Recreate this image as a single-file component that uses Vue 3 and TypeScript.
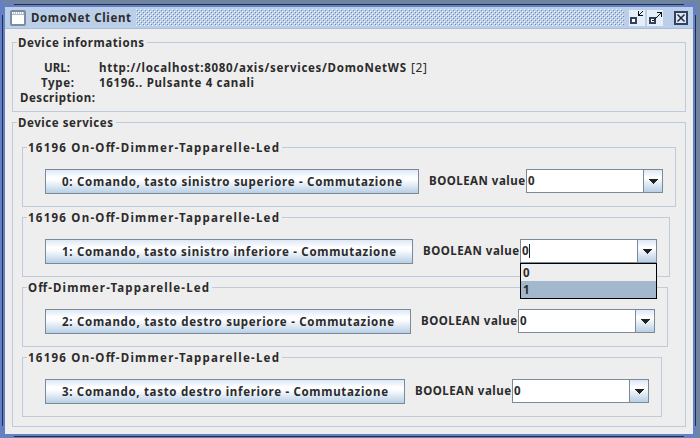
<script setup lang="ts">
import { ref } from 'vue'

interface Service {
  title: string
  titleWidth: number
  command: string
  width: number
  buttonWidth: number
}

const services: Service[] = [
  { title: '16196 On-Off-Dimmer-Tapparelle-Led', titleWidth: 251, command: '0: Comando, tasto sinistro superiore - Commutazione', width: 654, buttonWidth: 374 },
  { title: '16196 On-Off-Dimmer-Tapparelle-Led', titleWidth: 251, command: '1: Comando, tasto sinistro inferiore - Commutazione', width: 648, buttonWidth: 368 },
  { title: 'Off-Dimmer-Tapparelle-Led', titleWidth: 181, command: '2: Comando, tasto destro superiore - Commutazione', width: 646, buttonWidth: 366 },
  { title: '16196 On-Off-Dimmer-Tapparelle-Led', titleWidth: 251, command: '3: Comando, tasto destro inferiore - Commutazione', width: 640, buttonWidth: 360 },
]
const opened = ref(1)
const highlighted = ref(1)
</script>

<template>
  <div class="desktop">
    <main class="window">
      <header class="titlebar">
        <svg class="app-icon" width="16" height="16" viewBox="0 0 16 16">
          <rect x="1" y="1" width="14" height="14" rx="1" fill="#fff" stroke="#7d8ba3" stroke-width="2" />
          <path d="M2 4.5H14" stroke="#a9b7cc" />
          <path d="M3 3H14" stroke="#7d8ba3" stroke-dasharray="1 1" />
        </svg>
        <svg class="title" width="100" height="20"><text x="0" y="14" textLength="100">DomoNet Client</text></svg>
        <svg class="grip" width="488" height="17" shape-rendering="crispEdges">
          <defs>
            <pattern id="dots" width="4" height="4" patternUnits="userSpaceOnUse">
              <rect width="4" height="4" fill="#bdd0ea" />
              <path d="M0 0h1v1h-1zM2 2h1v1h-1z" fill="#f4f9ff" />
              <path d="M1 1h1v1h-1zM3 3h1v1h-1z" fill="#7189b4" />
            </pattern>
          </defs>
          <rect width="488" height="17" fill="url(#dots)" />
        </svg>
        <svg class="control" width="16" height="16" viewBox="0 0 16 16" shape-rendering="crispEdges">
          <rect width="16" height="16" fill="#e6eefa" />
          <rect x="2" y="8" width="5" height="5" fill="#fff" stroke="#33415f" stroke-width="2" />
          <path d="M9 1V6H14V5H11V4H12V3H13V2H14V1H13V2H12V3H11V4H10V1Z" fill="#111" />
        </svg>
        <svg class="control" width="16" height="16" viewBox="0 0 16 16" shape-rendering="crispEdges">
          <rect width="16" height="16" fill="#e6eefa" />
          <rect x="3" y="8" width="5" height="5" fill="#fff" stroke="#33415f" stroke-width="2" />
          <path d="M10 2H15V7H14V4H13V5H12V6H11V7H10V8H9V9H8V10H7V11H6V10H5V11H6V10H7V9H8V8H9V7H10V6H11V5H12V4H13V3H10Z" fill="#111" />
        </svg>
        <svg class="control close" width="14" height="14" viewBox="0 0 14 14">
          <rect x="1" y="1" width="12" height="12" fill="#dce8f8" stroke="#33415f" stroke-width="2" />
          <path d="M3.5 3.5L10.5 10.5M10.5 3.5L3.5 10.5" stroke="#222b3c" stroke-width="1.5" />
        </svg>
      </header>

      <section class="group info">
        <svg class="legend" width="130" height="16"><text x="1" y="12" textLength="126">Device informations</text></svg>
        <div class="row"><svg width="76" height="15"><text x="26" y="12" textLength="26">URL:</text></svg><svg width="340" height="15"><text x="5" y="12" textLength="307">http://localhost:8080/axis/services/DomoNetWS</text><text class="light" x="317" y="12" textLength="16">[2]</text></svg></div>
        <div class="row"><svg width="76" height="15"><text x="23" y="12" textLength="33">Type:</text></svg><svg width="340" height="15"><text x="5" y="12" textLength="155">16196.. Pulsante 4 canali</text></svg></div>
        <div class="row"><svg width="90" height="15"><text x="2" y="12" textLength="75">Description:</text></svg></div>
      </section>

      <section class="group services">
        <svg class="legend" width="99" height="16"><text x="1" y="12" textLength="95">Device services</text></svg>
        <div v-for="(s, i) in services" :key="i" class="group service" :style="{ width: s.width + 'px' }">
          <svg class="legend" :width="s.titleWidth + 4" height="16"><text x="1" y="12" :textLength="s.titleWidth">{{ s.title }}</text></svg>
          <button class="command" :style="{ width: s.buttonWidth + 'px' }">
            <svg :width="s.buttonWidth - 2" height="23"><text x="16" y="16" :textLength="s.buttonWidth - 34">{{ s.command }}</text></svg>
          </button>
          <svg class="label" width="97" height="24"><text x="0" y="16" textLength="96">BOOLEAN value</text></svg>
          <div class="combo" @click="opened = opened === i ? -1 : i">
            <div class="field"><span>0</span><i v-if="opened === i" class="caret"></i></div>
            <div class="arrow"><svg width="10" height="5" shape-rendering="crispEdges"><path d="M0 0H10L5 5Z" fill="#222" /></svg></div>
            <ul v-if="opened === i" class="popup">
              <li v-for="v in [0, 1]" :key="v" :class="{ selected: v === highlighted }" @mouseenter="highlighted = v">{{ v }}</li>
            </ul>
          </div>
        </div>
      </section>
    </main>
  </div>
</template>

<style>
body { overflow: hidden; }
</style>
<style scoped>
* { box-sizing: border-box; }
.desktop {
  width: 700px; height: 438px; padding: 4px 4px 1px 2px;
  font: 700 11.5px "Noto Sans", sans-serif; color: #2b2b2b;
  background:
    linear-gradient(#6680c4, #6680c4) 0 0 / 2px 100% no-repeat,
    linear-gradient(#6680c4, #6680c4) 0 3px / 14px 12px no-repeat,
    linear-gradient(#6680c4, #6680c4) 0 100% / 14px 13px no-repeat,
    linear-gradient(#6680c4, #6680c4) 684px 3px / 13px 13px no-repeat,
    linear-gradient(#6680c4, #6680c4) 684px 425px / 13px 13px no-repeat,
    #70849e;
}
svg { display: block; flex: none; overflow: visible; }
text { fill: #2b2b2b; }
.light { font-weight: 400; font-size: 12px; }
.window {
  width: 694px; height: 433px; padding: 3px;
  background:
    linear-gradient(#eee, #eee) 3px 3px / 688px 427px no-repeat,
    linear-gradient(#6680c4, #6680c4) 1px 1px / 692px 431px no-repeat,
    linear-gradient(#6680c4, #6680c4) 0 0 / 12px 11px no-repeat,
    linear-gradient(#6680c4, #6680c4) 100% 0 / 12px 11px no-repeat,
    linear-gradient(#6680c4, #6680c4) 0 100% / 12px 11px no-repeat,
    linear-gradient(#6680c4, #6680c4) 100% 100% / 12px 11px no-repeat,
    #1c2f5c;
}
.titlebar { height: 22px; display: flex; align-items: center; background: #bccfe9; padding: 0 5px; border-bottom: 1px solid #a9bddb; }
.title { margin-left: 5px; }
.grip { margin: 0 5px; }
.control + .control { margin-left: 2px; }
.control + .close { margin-left: 11px; }
.group { position: relative; border: 1px solid #bdcbdd; }
.legend { position: absolute; left: 4px; top: -8px; background: #eee; }
.info { width: 674px; height: 70px; margin: 13px 0 0 7px; padding-top: 17px; }
.row { display: flex; height: 15px; padding-left: 5px; }
.services { width: 674px; height: 305px; margin: 10px 0 0 7px; padding: 24px 0 0 9px; }
.service { height: 60px; margin-bottom: 10px; display: flex; padding: 21px 0 0 22px; }
.command { height: 25px; padding: 0; border: 1px solid #7a8a99; background: linear-gradient(#dde8f6, #fff 32%, #fbfcff 45%, #b8cfe5); font: inherit; flex: none; }
.label { margin-left: 10px; }
.combo { position: relative; display: flex; width: 137px; height: 24px; border: 1px solid #7a8a99; }
.field { flex: 1; background: #fff; display: flex; padding-left: 1px; line-height: 22px; }
.caret { width: 1px; height: 14px; margin-top: 4px; background: #222; }
.arrow { width: 19px; border-left: 1px solid #7a8a99; background: linear-gradient(#dde8f6, #fff 35%, #b8cfe5); display: grid; place-items: center; }
.popup { position: absolute; z-index: 5; left: -1px; top: 23px; width: 137px; height: 36px; margin: 0; padding: 0; list-style: none; border: 1px solid #000; background: #eee; }
.popup li { height: 17px; line-height: 18px; padding-left: 2px; }
.popup .selected { background: #a3b8cc; }
</style>
